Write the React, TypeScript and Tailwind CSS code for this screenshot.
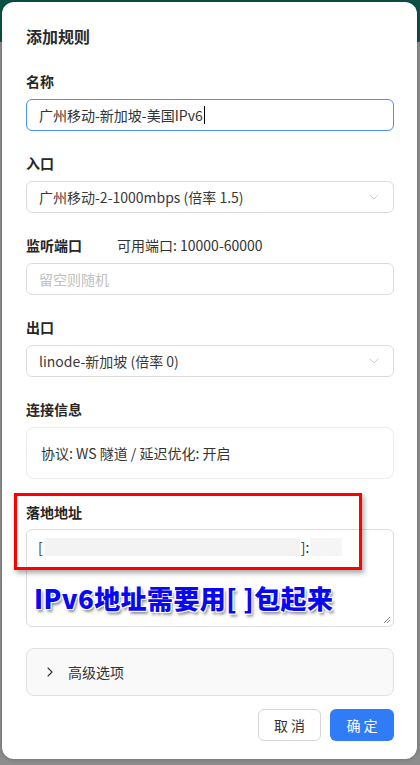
import { ChevronDown, ChevronRight } from "lucide-react";

const font = {
  fontFamily: '"Noto Sans CJK SC", "Noto Sans", sans-serif',
};

function Label({ children }: { children: React.ReactNode }) {
  return <div className="h-5 text-[14px] leading-5 font-semibold text-[#262626]">{children}</div>;
}

function Select({ value }: { value: string }) {
  return (
    <div className="mt-2 flex h-8 items-center justify-between rounded-md border border-[#dcdcdc] bg-white pl-3 pr-[11px] text-[14px] text-[#3a3a3a]">
      <span>{value}</span>
      <ChevronDown size={16} strokeWidth={1} className="text-[#b5b5b5]" />
    </div>
  );
}

export default function App() {
  return (
    <div
      className="min-h-[765px] w-[420px] bg-[linear-gradient(#0d5146_0_42px,#8d8d8d_42px)] pt-[2px] pl-[2px]"
      style={font}
    >
      <div className="h-[757px] w-[415px] rounded-xl bg-white pt-[22px] pl-6 pr-[23px] shadow-[0_0_4px_rgba(0,0,0,0.25)]">
        <div className="h-6 text-[16px] leading-6 font-semibold text-[#2b2b2b]">添加规则</div>

        <div className="mt-[23px]">
          <Label>名称</Label>
          <div className="mt-2 flex h-8 items-center rounded-md border border-[#4b8ff7] bg-white px-3 text-[14px] text-[#333]">
            <span>广州移动-新加坡-美国IPv6</span>
            <span className="ml-px h-[18px] w-px bg-black" />
          </div>
        </div>

        <div className="mt-[22px]">
          <Label>入口</Label>
          <Select value="广州移动-2-1000mbps (倍率 1.5)" />
        </div>

        <div className="mt-[22px]">
          <div className="flex h-5 items-center">
            <Label>监听端口</Label>
            <span className="ml-[35px] text-[14px] text-[#333]">可用端口: 10000-60000</span>
          </div>
          <div className="mt-2 flex h-8 items-center rounded-md border border-[#dcdcdc] bg-white px-3 text-[14px] text-[#c0c0c0]">
            留空则随机
          </div>
        </div>

        <div className="mt-[22px]">
          <Label>出口</Label>
          <Select value="linode-新加坡 (倍率 0)" />
        </div>

        <div className="mt-[22px]">
          <Label>连接信息</Label>
          <div className="mt-2 flex h-[52px] items-center rounded-lg border border-[#ececec] bg-white px-[14px] text-[14px] text-[#333]">
            协议: WS 隧道 / 延迟优化: 开启
          </div>
        </div>

        <div className="relative mt-[23px]">
          <Label>落地地址</Label>
          <div className="relative mt-[7px] h-[98px] rounded-md border border-[#dcdcdc] bg-white pl-[11px] pr-3 pt-[7px]">
            <div className="flex h-5 items-center text-[14px] text-[#333]">
              <span>[</span>
              <span className="ml-[1px] h-[18px] w-[256px] bg-[#f3f3f3]" />
              <span className="ml-[1px]">]:</span>
              <span className="ml-[1px] h-[18px] w-[32px] bg-[#f5f5f5]" />
            </div>
            <svg className="absolute right-[2px] bottom-[2px]" width="8" height="8" viewBox="0 0 8 8">
              <path d="M7 1L1 7M7 4L4 7" stroke="#888" strokeWidth="1" />
            </svg>
            <div className="absolute top-[52px] left-[7px] text-[26px] leading-8 font-black tracking-[0.4px] text-[#0808f2] [text-shadow:1px_1px_0_#fff,-1px_-1px_0_#fff,1px_-1px_0_#fff,-1px_1px_0_#fff,2px_3px_3px_rgba(0,0,0,0.45)]">
              IPv6地址需要用[ ]包起来
            </div>
          </div>
          <div className="absolute top-[-9px] left-[-12px] h-[77px] w-[348px] border-[3px] border-[#ff0000] shadow-[2px_3px_5px_rgba(0,0,0,0.35)]" />
        </div>

        <div className="mt-[21px] flex h-[48px] items-center rounded-lg border border-[#e0e0e0] bg-[#f9f9f9] pl-[15px] text-[14px] text-[#333]">
          <ChevronRight size={16} strokeWidth={1.6} className="text-[#333]" />
          <span className="ml-[10px]">高级选项</span>
        </div>

        <div className="mt-[13px] flex justify-end gap-[9px]">
          <div className="flex h-8 w-[63px] items-center justify-center rounded-md border border-[#d6d6d6] bg-white pl-[3px] text-[14px] tracking-[3px] text-[#333]">
            取消
          </div>
          <div className="flex h-8 w-[64px] items-center justify-center rounded-md bg-[#2f7cf6] pl-[3px] text-[14px] tracking-[3px] text-white">
            确定
          </div>
        </div>
      </div>
    </div>
  );
}
